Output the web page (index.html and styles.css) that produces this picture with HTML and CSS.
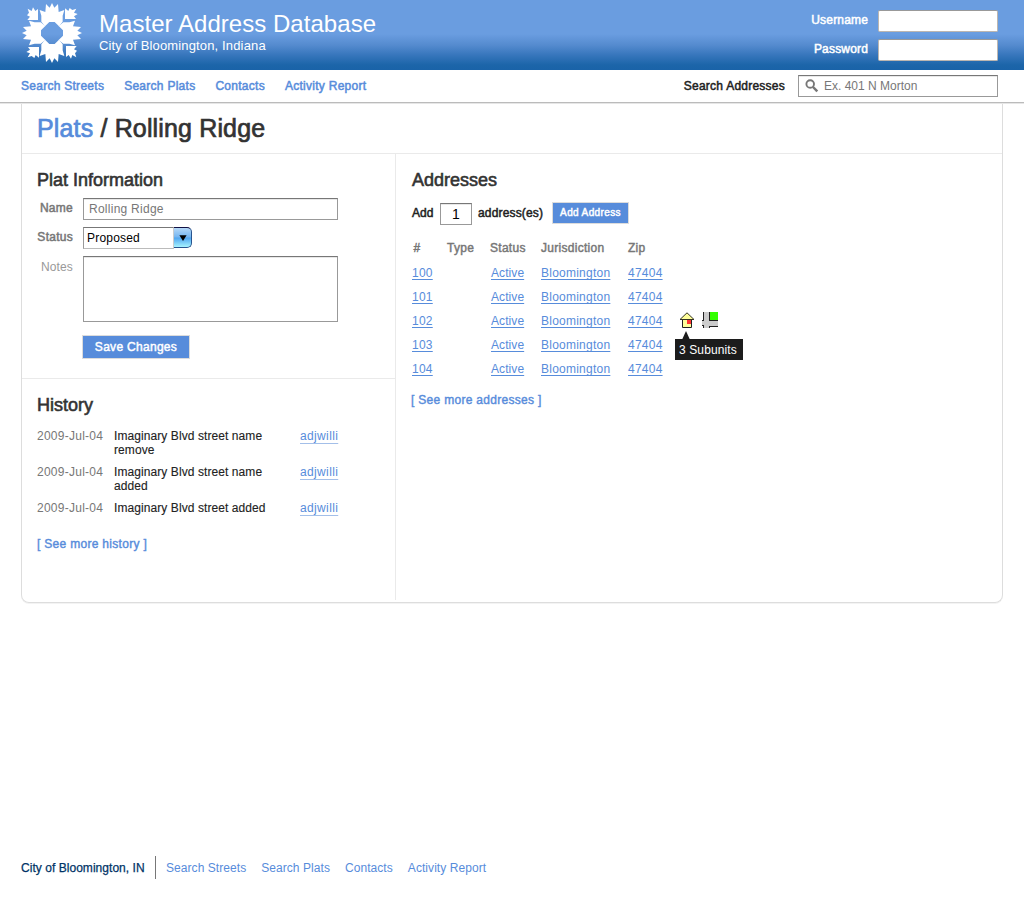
FILE: index.html
```html
<!DOCTYPE html>
<html lang="en">
<head>
<meta charset="utf-8">
<title>Master Address Database</title>
<link rel="stylesheet" href="styles.css">
</head>
<body>
<header class="banner">
  <svg class="logo" viewBox="36 9 180 180" fill="#fff">
    <defs>
      <g id="petal">
        <path d="M126 9L133 23L144 12L146 36L163 30L158 47V65L147 79L134 66H118L105 79L94 65V47L89 30L106 36L108 12L119 23Z"/>
        <path d="M84 60L84 27L76 33L69 22L65 33L53 26L57 38L51 46L60 50L52 60Z"/>
      </g>
    </defs>
    <use href="#petal"/>
    <use href="#petal" transform="rotate(90 126 99)"/>
    <use href="#petal" transform="rotate(180 126 99)"/>
    <use href="#petal" transform="rotate(270 126 99)"/>
  </svg>
  <div class="brand">
    <div class="brand-title">Master Address Database</div>
    <div class="brand-sub">City of Bloomington, Indiana</div>
  </div>
  <form class="login">
    <label class="login-row"><span class="strong">Username</span><input class="login-input" type="text"></label>
    <label class="login-row"><span class="strong">Password</span><input class="login-input" type="password"></label>
  </form>
</header>
<nav class="nav">
  <a class="strong">Search Streets</a><a class="strong">Search Plats</a><a class="strong">Contacts</a><a class="strong">Activity Report</a>
  <label class="search">
    <span class="strong search-label">Search Addresses</span>
    <span class="field search-field">
      <svg width="14" height="14" viewBox="0 0 14 14" fill="none" stroke="#777"><circle cx="5.2" cy="5" r="3.8" stroke-width="1.9"/><path d="M8 8L12.3 12.4" stroke-width="2.5"/></svg>
      <span>Ex. 401 N Morton</span>
    </span>
  </label>
</nav>
<main class="panel">
  <h1 class="page-title"><a>Plats</a> / Rolling Ridge</h1>
  <div class="columns">
    <div class="left">
      <section class="info">
        <h2>Plat Information</h2>
        <div class="form-row name-row"><span class="form-label strong">Name</span><span class="field name-field">Rolling Ridge</span></div>
        <div class="form-row status-row"><span class="form-label strong">Status</span>
          <span class="select"><span class="select-value">Proposed</span><span class="select-button"><svg width="8" height="6" viewBox="0 0 8 6"><path d="M.4 .3H7.6L4 6Z"/></svg></span></span>
        </div>
        <div class="form-row notes-row"><span class="form-label notes-label">Notes</span><textarea class="notes"></textarea></div>
        <button class="button save" type="button">Save Changes</button>
      </section>
      <section class="history">
        <h2>History</h2>
        <div class="log"><span class="date">2009-Jul-04</span><span class="event">Imaginary Blvd street name<br>remove</span><a class="user">adjwilli</a></div>
        <div class="log"><span class="date">2009-Jul-04</span><span class="event">Imaginary Blvd street name<br>added</span><a class="user">adjwilli</a></div>
        <div class="log"><span class="date">2009-Jul-04</span><span class="event">Imaginary Blvd street added</span><a class="user">adjwilli</a></div>
        <a class="more more-history">[ See more history ]</a>
      </section>
    </div>
    <section class="addresses">
      <h2>Addresses</h2>
      <div class="add-row"><span class="strong add-word">Add</span><span class="field count">1</span><span class="strong unit">address(es)</span><button class="button add" type="button">Add Address</button></div>
      <table class="list">
        <colgroup><col class="c-num"><col class="c-type"><col class="c-status"><col class="c-jur"><col class="c-zip"><col class="c-tools"></colgroup>
        <tr><th class="num">#</th><th>Type</th><th>Status</th><th>Jurisdiction</th><th>Zip</th><th></th></tr>
        <tr><td><a>100</a></td><td></td><td class="state"><a>Active</a></td><td><a>Bloomington</a></td><td><a>47404</a></td><td></td></tr>
        <tr><td><a>101</a></td><td></td><td class="state"><a>Active</a></td><td><a>Bloomington</a></td><td><a>47404</a></td><td></td></tr>
        <tr><td><a>102</a></td><td></td><td class="state"><a>Active</a></td><td><a>Bloomington</a></td><td><a>47404</a></td><td>
          <div class="tools">
            <svg width="16" height="16" viewBox="0 0 16 16"><path d="M3.5 7.5V15.5H12.5V7.5" fill="#ff9" stroke="#222"/><path d="M8 .8L15 7.5H1Z" fill="#ff9" stroke="#332"/><path d="M4 8h8v2H4z" fill="#ff9"/><path d="M8 8h4v4H8z" fill="#f33"/></svg>
            <svg width="16" height="16" viewBox="0 0 16 16" shape-rendering="crispEdges"><path d="M1 0h6v9h9v5H7v2H1z" fill="#ccc"/><path d="M0 9h3v5H0z" fill="#ccc"/><path d="M8 0h8v8H8z" fill="#3f0"/><path d="M7 0h1v8h8v1H7zM1 0h1v9H0V8h1zM0 13h2v3H1v-2H0zM7 14h9v1H8v1H7z" fill="#222"/></svg>
            <div class="tip"><svg class="tip-arrow" width="12" height="11" viewBox="0 0 12 11"><path d="M6 0L11 11H1Z" fill="#1c1c1c"/></svg>3 Subunits</div>
          </div>
        </td></tr>
        <tr><td><a>103</a></td><td></td><td class="state"><a>Active</a></td><td><a>Bloomington</a></td><td><a>47404</a></td><td></td></tr>
        <tr><td><a>104</a></td><td></td><td class="state"><a>Active</a></td><td><a>Bloomington</a></td><td><a>47404</a></td><td></td></tr>
      </table>
      <a class="more more-addresses">[ See more addresses ]</a>
    </section>
  </div>
</main>
<footer class="footer">
  <span class="city">City of Bloomington, IN</span>
  <a>Search Streets</a><a>Search Plats</a><a>Contacts</a><a>Activity Report</a>
</footer>
</body>
</html>
```
FILE: styles.css
```css
* { box-sizing: border-box; }
body { margin: 0; background: #fff; color: #333; font: 12px/14px "Liberation Sans", Arial, sans-serif; display: flex; flex-direction: column; height: 900px; overflow: hidden; }
a { color: #578cdb; }
svg { display: block; flex: none; }
input, textarea, button { font: inherit; margin: 0; padding: 0; border-radius: 0; }
.strong { -webkit-text-stroke: .5px currentColor; letter-spacing: .27px; }

.banner { flex: none; height: 70px; display: flex; align-items: flex-start; padding: 3px 26px 0 22px; color: #fff; background: linear-gradient(#6a9de0 0, #6a9de0 34px, #558bcf 45px, #3776bc 55px, #1c65a9 65px, #1a63a8 70px); }
.logo { width: 60px; height: 60px; }
.brand { margin: 7px 0 0 17px; }
.brand-title { font-size: 24px; line-height: 27px; letter-spacing: .04px; }
.brand-sub { margin-top: 1px; font-size: 13px; line-height: 15px; letter-spacing: .15px; }
.login { margin: 7px 0 0 auto; display: flex; flex-direction: column; gap: 7px; }
.login-row { display: flex; justify-content: flex-end; gap: 10px; }
.login-row span { padding-top: 3px; letter-spacing: .17px; }
.login-input { width: 120px; height: 22px; background: #fff; border: 1px solid #bcb6b0; border-top-color: #999; border-radius: 2px; }

.nav { flex: none; height: 33px; border-bottom: 1px solid #bbb; box-shadow: 0 1px 0 #e6e6e6; position: relative; display: flex; align-items: center; gap: 20px; padding: 0 26px 0 21px; }
.search { margin-left: auto; display: flex; align-items: center; gap: 13px; }
.search-label { letter-spacing: .24px; color: #222; }
.field { display: flex; align-items: center; height: 22px; border: 1px solid #999; border-top-color: #777; box-shadow: inset 0 1px 0 #e8e8e8; background: #fff; color: #777; }
.search-field { width: 200px; padding-left: 6px; gap: 5px; }

.panel { flex: none; width: 982px; height: 500px; margin-left: 21px; border: 1px solid #ddd; border-top: 0; border-radius: 0 0 8px 8px; box-shadow: 0 1px 0 #f3f3f3; display: flex; flex-direction: column; }
.page-title { flex: none; margin: 0; height: 51px; padding: 11px 0 0 15px; border-bottom: 1px solid #eaeaea; font-size: 25px; line-height: 28px; font-weight: 400; letter-spacing: .15px; -webkit-text-stroke: .7px currentColor; }
.columns { flex: 1; display: flex; }
.left { width: 374px; height: 446px; border-right: 1px solid #eaeaea; }
h2 { margin: 0; font-size: 18px; line-height: 20px; font-weight: 400; -webkit-text-stroke: .6px currentColor; }
.info { height: 225px; padding: 16px 0 0 14px; border-bottom: 1px solid #eaeaea; }
.info h2 { margin-left: 1px; }
.form-row { display: flex; gap: 10px; }
.form-label { width: 37px; padding-top: 3px; text-align: right; color: #777; white-space: nowrap; }
.name-row { margin-top: 8px; }
.name-field { width: 255px; padding-left: 5px; letter-spacing: .26px; }
.status-row { margin-top: 7px; height: 22px; }
.select { display: flex; color: #000; letter-spacing: .2px; }
.select-value { width: 91px; height: 22px; padding: 3px 0 0 3px; border: 1px solid #999; border-top-color: #777; border-right-color: #ccc; border-bottom-color: #bbb; }
.select-button { width: 18px; height: 21px; display: flex; align-items: center; justify-content: center; border: 1px solid #28558f; border-top-color: #114; border-left: 0; border-radius: 0 5px 5px 0; background: linear-gradient(#b5d8f8, #74b5f0 48%, #50a5f0 52%, #a6f4ff); }
.notes-row { margin-top: 7px; }
.notes-label { padding-top: 4px; color: #999; letter-spacing: .15px; }
.notes { display: block; width: 255px; height: 66px; resize: none; border: 1px solid #999; border-top-color: #777; box-shadow: inset 0 1px 0 #e8e8e8; background: #fff; }
.button { display: block; border: 1px solid #dcdcdc; background: #578cdb; color: #fff; letter-spacing: .3px; -webkit-text-stroke: .45px #fff; white-space: nowrap; }
.save { margin: 13px 0 0 46px; width: 108px; height: 24px; }
.history { padding: 16px 0 0 15px; }
.history h2 { margin: 0 0 14px; }
.log { display: grid; grid-template-columns: 77px 186px auto; margin-bottom: 8px; }
.date { color: #777; letter-spacing: .26px; }
.event { color: #222; letter-spacing: .08px; -webkit-text-stroke: .12px currentColor; }
.user { letter-spacing: .36px; text-decoration: underline 1px #a3bfe9; text-underline-offset: 3px; text-decoration-skip-ink: none; }
.more { display: block; letter-spacing: .3px; -webkit-text-stroke: .4px currentColor; }
.more-history { margin-top: 22px; }

.addresses { padding: 16px 0 0 16px; }
.add-row { margin-top: 12px; display: flex; align-items: flex-start; height: 23px; color: #222; }
.add-word { width: 28px; padding-top: 4px; letter-spacing: .05px; }
.count { margin-top: 1px; width: 32px; justify-content: center; color: #000; font-size: 14px; }
.unit { width: 75px; padding: 4px 0 0 6px; letter-spacing: .16px; }
.add { margin-left: 5px; width: 77px; height: 22px; font-size: 10px; line-height: 12px; letter-spacing: .37px; }
.list { table-layout: fixed; width: 335px; border-collapse: collapse; margin-top: 11px; }
.c-num { width: 35px; } .c-type { width: 43px; } .c-status { width: 51px; } .c-jur { width: 87px; } .c-zip { width: 51px; } .c-tools { width: 68px; }
.list th, .list td { height: 24px; padding: 0; text-align: left; vertical-align: middle; }
.list th { color: #777; font-weight: 400; letter-spacing: .28px; -webkit-text-stroke: .45px currentColor; height: 25px; padding-bottom: 2px; }
.list .num { padding-left: 1.5px; }
.list .state { padding-left: 1px; letter-spacing: .08px; }
.list td { letter-spacing: .24px; }
.list td a { text-decoration: underline 1px; text-underline-offset: 2px; text-decoration-skip-ink: none; }
.tools { position: relative; display: flex; gap: 7px; height: 16px; margin: -3px 0 0; }
.tip { position: absolute; left: -4px; top: 27px; width: 68px; height: 21px; padding: 4px 0 0 4px; background: #1c1c1c; color: #fff; letter-spacing: .12px; white-space: nowrap; }
.tip-arrow { position: absolute; left: 5px; top: -8px; }
.more-addresses { margin: 12px 0 0 -1px; }

.footer { margin: 253px 0 0 21px; display: flex; align-items: center; height: 23px; gap: 15px; }
.footer a { letter-spacing: .06px; }
.city { color: #036; height: 23px; line-height: 24px; width: 135px; margin-right: -5px; border-right: 1px solid #777; -webkit-text-stroke: .25px currentColor; letter-spacing: .04px; white-space: nowrap; }
```
